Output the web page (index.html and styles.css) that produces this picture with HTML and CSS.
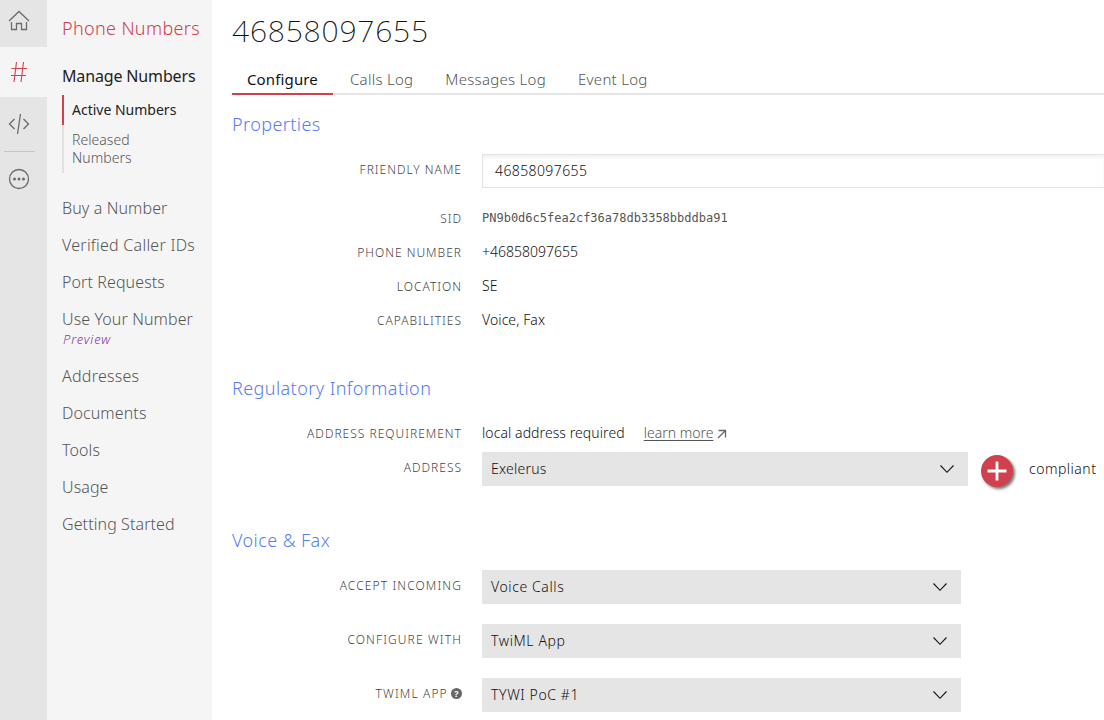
FILE: index.html
```
<!DOCTYPE html>
<html lang="en">
<head>
<meta charset="utf-8">
<title>Phone Numbers</title>
<link rel="stylesheet" href="styles.css">
</head>
<body>
<div class="app">
  <nav class="rail">
    <a class="rail-item rail-home"><svg width="22" height="22" viewBox="0 0 22 22"><path d="M1 11 11 1.500 21 11M3.500 12v7.500h5v-6h5v6h5V12"/></svg></a>
    <a class="rail-item rail-active"><svg width="18" height="22" viewBox="0 0 18 22"><path d="M6.500 1 4 21M13.500 1 11 21M1.500 7.500h15.500M1 14.500h15"/></svg></a>
    <a class="rail-item rail-code"><svg width="22" height="22" viewBox="0 0 22 22"><path d="M6.500 6 1.500 11l5 5M15.500 6l5 5-5 5M12.500 1 9.500 21"/></svg></a>
    <span class="rail-line"></span>
    <a class="rail-item rail-more"><svg width="22" height="22" viewBox="0 0 22 22"><circle cx="11" cy="11" r="9.500"/><g class="dots"><circle cx="6.500" cy="11" r="1.500"/><circle cx="11" cy="11" r="1.500"/><circle cx="15.500" cy="11" r="1.500"/></g></svg></a>
  </nav>
  <aside class="side">
    <div class="side-title"><span>Phone Numbers</span></div>
    <div class="side-group"><span>Manage Numbers</span></div>
    <div class="sub sub-active"><span>Active Numbers</span></div>
    <div class="sub sub-released"><span>Released<br>Numbers</span></div>
    <ul class="menu">
      <li>Buy a Number</li>
      <li>Verified Caller IDs</li>
      <li>Port Requests</li>
      <li>Use Your Number<em>Preview</em></li>
      <li>Addresses</li>
      <li>Documents</li>
      <li>Tools</li>
      <li>Usage</li>
      <li>Getting Started</li>
    </ul>
  </aside>
  <main class="main">
    <h1>46858097655</h1>
    <div class="tabs">
      <a class="tab tab-active">Configure</a><a class="tab">Calls Log</a><a class="tab">Messages Log</a><a class="tab">Event Log</a>
    </div>
    <section class="properties">
      <h2>Properties</h2>
      <div class="row row-control row-name"><label>FRIENDLY NAME</label><div class="input">46858097655</div></div>
      <div class="row"><label>SID</label><span class="sid">PN9b0d6c5fea2cf36a78db3358bbddba91</span></div>
      <div class="row"><label>PHONE NUMBER</label><span class="value phone">+46858097655</span></div>
      <div class="row"><label>LOCATION</label><span class="value">SE</span></div>
      <div class="row"><label>CAPABILITIES</label><span class="value">Voice, Fax</span></div>
    </section>
    <section class="regulatory">
      <h2>Regulatory Information</h2>
      <div class="row"><label>ADDRESS REQUIREMENT</label><span class="value">local address required</span><a class="learn">learn more</a><svg class="out" width="10" height="10" viewBox="0 0 10 10"><path d="M1.500 1.500h7v7M8.500 1.500l-7.500 7.500"/></svg></div>
      <div class="row row-control row-address"><label>ADDRESS</label><div class="select select-wide"><span>Exelerus</span><svg width="16" height="10" viewBox="0 0 16 10"><path d="m1.500 1.500 6.500 6.800 6.500-6.800"/></svg></div><button class="add"><svg width="20" height="20" viewBox="0 0 20 20"><path d="M10 .5v19M.5 10h19"/></svg></button><span class="compliant">compliant</span></div>
    </section>
    <section class="voice">
      <h2>Voice &amp; Fax</h2>
      <div class="row row-control"><label>ACCEPT INCOMING</label><div class="select"><span>Voice Calls</span><svg width="16" height="10" viewBox="0 0 16 10"><path d="m1.500 1.500 6.500 6.800 6.500-6.800"/></svg></div></div>
      <div class="row row-control"><label>CONFIGURE WITH</label><div class="select"><span>TwiML App</span><svg width="16" height="10" viewBox="0 0 16 10"><path d="m1.500 1.500 6.500 6.800 6.500-6.800"/></svg></div></div>
      <div class="row row-control"><label>TWIML APP <b class="help">?</b></label><div class="select"><span>TYWI PoC #1</span><svg width="16" height="10" viewBox="0 0 16 10"><path d="m1.500 1.500 6.500 6.800 6.500-6.800"/></svg></div></div>
    </section>
  </main>
</div>
</body>
</html>
```
FILE: styles.css
```
* { box-sizing: border-box; }
body { margin: 0; font-family: "Noto Sans", "Open Sans", sans-serif; font-weight: 300; font-size: 14px; color: #111; background: #fff; overflow: hidden; }
.app { display: flex; height: 720px; width: 1104px; overflow: hidden; }
svg { fill: none; stroke: currentColor; stroke-width: 1.3; flex: none; }
.rail { width: 47px; flex: none; background: #e5e5e5; color: #6b6b6b; display: flex; flex-direction: column; }
.rail-item { display: flex; justify-content: center; align-items: center; padding-right: 9px; height: 50px; }
.rail-home { height: 47px; padding-bottom: 6px; }
.rail-active { background: #f5f5f5; color: #d0414d; }
.rail-active svg { stroke-width: 1.1; }
.rail-code { height: 54px; }
.rail-line { height: 1px; width: 31px; margin-left: 4px; background: #c6c6c6; }
.rail-more { height: 54px; }
.dots { fill: currentColor; stroke: none; }
.side { width: 165px; flex: none; background: #f5f5f5; padding: 12px 0 0 15px; color: #555; white-space: nowrap; }
.side-title { font-size: 18px; line-height: 32px; letter-spacing: .35px; color: #d0414d; }
.side-group { font-size: 16px; line-height: 24px; margin-top: 20px; letter-spacing: -.15px; color: #222; font-weight: 400; }
.sub { border-left: 2px solid #e2e2e2; padding-left: 8px; line-height: 18px; }
.sub-active { margin-top: 7px; border-color: #d0414d; line-height: 30px; color: #222; font-weight: 400; }
.sub-released { height: 48px; padding-top: 6px; letter-spacing: .05px; }
.menu { list-style: none; margin: 23px 0 0; padding: 0; font-size: 16px; line-height: 24px; letter-spacing: .1px; }
.menu li { margin-bottom: 13px; }
.menu li:nth-child(2), .menu li:nth-child(5) { letter-spacing: .25px; }
.menu em { display: block; font-size: 13px; line-height: 20px; margin-top: -2px; margin-bottom: 15px; padding-left: 1px; letter-spacing: .85px; color: #8035a5; }
.main { flex: 1; min-width: 0; padding-left: 20px; white-space: nowrap; }
h1 { margin: 0; padding-top: 11px; font-size: 30px; line-height: 40px; font-weight: 200; letter-spacing: .8px; }
.tabs { display: flex; height: 30px; margin-top: 14px; border-bottom: 2px solid #e5e5e5; font-size: 15px; line-height: 29px; letter-spacing: .28px; color: #555; }
.tab { height: 30px; margin-right: 32px; }
.tab-active { padding: 0 15px; margin-right: 17px; border-bottom: 2px solid #d0414d; color: #111; font-weight: 400; letter-spacing: .14px; }
h2 { margin: 0; font-size: 18px; line-height: 30px; font-weight: 300; letter-spacing: .42px; color: #567df5; }
.properties { padding-top: 14px; }
.regulatory { padding-top: 36px; }
.voice { padding-top: 39px; }
.row { display: flex; align-items: center; height: 34px; }
.row label { width: 230px; margin-right: 20px; padding-top: 2px; text-align: right; font-size: 12px; color: #444; letter-spacing: 1px; flex: none; line-height: 30px; }
.row-control label { align-self: flex-start; padding-top: 1px; }
.row-name { margin: 15px 0 13px; }
.input { flex: 1; height: 34px; border: 1px solid #e2e2e2; border-right: 0; padding-left: 12px; line-height: 32px; letter-spacing: .4px; box-shadow: inset 0 3px 3px #f3f3f3; }
.sid { font-family: "DejaVu Sans Mono", monospace; font-size: 12px; color: #555; }
.value { padding-bottom: 1px; letter-spacing: .08px; }
.phone { letter-spacing: 0; }
.regulatory .row:nth-child(2) { margin-top: 13px; }
.learn { margin-left: 19px; padding-bottom: 1px; color: #555; text-decoration: underline; text-underline-offset: 2px; }
.out { margin-left: 4px; margin-top: 2px; color: #666; }
.row-address { margin-top: 2px; }
.select { width: 479px; height: 34px; background: #e5e5e5; padding: 0 13px 0 9px; display: flex; align-items: center; justify-content: space-between; letter-spacing: .6px; flex: none; }
.select span { padding-bottom: 1px; }
.select svg { stroke-width: 1.1; }
.select-wide { width: 486px; letter-spacing: .25px; }
.add { width: 32px; height: 32px; margin-left: 13px; margin-top: 4px; border: 0; border-radius: 50%; background: #d0414d; color: #fff; padding: 0; display: flex; align-items: center; justify-content: center; box-shadow: 2px 2px 3px #777; flex: none; }
.add svg { stroke-width: 2.8; }
.compliant { margin-left: 16px; padding-bottom: 1px; letter-spacing: .5px; }
.voice .row { margin-top: 20px; }
.voice h2 + .row { margin-top: 15px; }
.voice label { letter-spacing: 1.12px; }
.help { display: inline-block; width: 11px; height: 11px; border-radius: 50%; background: #666; color: #fff; font-size: 9px; line-height: 11px; text-align: center; font-weight: 700; letter-spacing: 0; vertical-align: 1px; margin-left: -1px; }
```
